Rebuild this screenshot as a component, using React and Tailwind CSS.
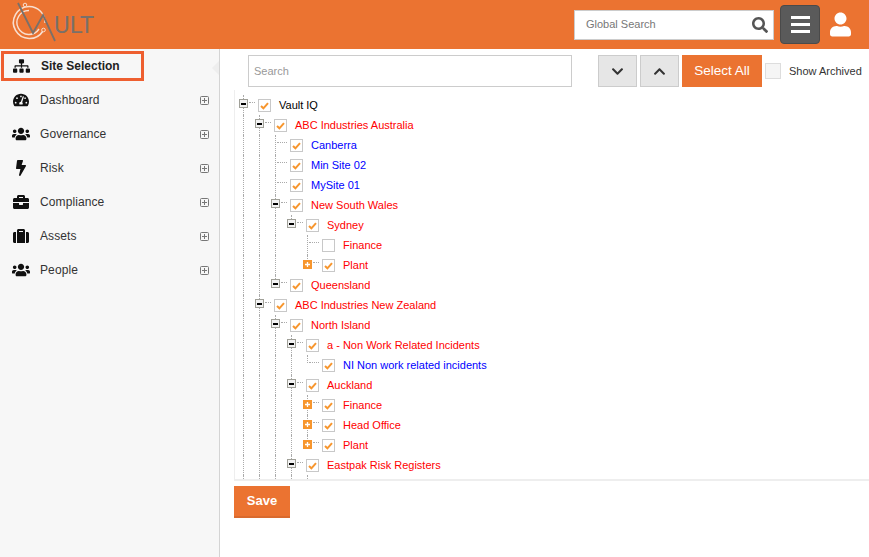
import React from "react";
import {
  FaBolt,
  FaBriefcase,
  FaChevronDown,
  FaChevronUp,
  FaSearch,
  FaSitemap,
  FaSuitcase,
  FaTachometerAlt,
  FaUser,
  FaUsers,
} from "react-icons/fa";

const FONT = "font-['Liberation_Sans',Arial,sans-serif]";

const navItems = [
  { label: "Dashboard", icon: FaTachometerAlt, size: "h-4 w-4" },
  { label: "Governance", icon: FaUsers, size: "h-[18px] w-[18px] -mx-px" },
  { label: "Risk", icon: FaBolt, size: "h-4 w-4" },
  { label: "Compliance", icon: FaBriefcase, size: "h-4 w-4" },
  { label: "Assets", icon: FaSuitcase, size: "h-4 w-4" },
  { label: "People", icon: FaUsers, size: "h-[18px] w-[18px] -mx-px" },
];

// d = depth, guides = columns with a line running through, last = last sibling
const treeRows = [
  { text: "Vault IQ", color: "text-black", d: 0, guides: [], toggle: "minus" },
  { text: "ABC Industries Australia", color: "text-[#ff0000]", d: 1, guides: [0], toggle: "minus" },
  { text: "Canberra", color: "text-[#0000ff]", d: 2, guides: [0, 1] },
  { text: "Min Site 02", color: "text-[#0000ff]", d: 2, guides: [0, 1] },
  { text: "MySite 01", color: "text-[#0000ff]", d: 2, guides: [0, 1] },
  { text: "New South Wales", color: "text-[#ff0000]", d: 2, guides: [0, 1], toggle: "minus" },
  { text: "Sydney", color: "text-[#ff0000]", d: 3, guides: [0, 1, 2], toggle: "minus", last: true },
  { text: "Finance", color: "text-[#ff0000]", d: 4, guides: [0, 1, 2], unchecked: true },
  { text: "Plant", color: "text-[#ff0000]", d: 4, guides: [0, 1, 2], toggle: "plus", last: true },
  { text: "Queensland", color: "text-[#ff0000]", d: 2, guides: [0, 1], toggle: "minus", last: true },
  { text: "ABC Industries New Zealand", color: "text-[#ff0000]", d: 1, guides: [0], toggle: "minus" },
  { text: "North Island", color: "text-[#ff0000]", d: 2, guides: [0, 1], toggle: "minus" },
  { text: "a - Non Work Related Incidents", color: "text-[#ff0000]", d: 3, guides: [0, 1, 2], toggle: "minus" },
  { text: "NI Non work related incidents", color: "text-[#0000ff]", d: 4, guides: [0, 1, 2, 3], last: true },
  { text: "Auckland", color: "text-[#ff0000]", d: 3, guides: [0, 1, 2], toggle: "minus" },
  { text: "Finance", color: "text-[#ff0000]", d: 4, guides: [0, 1, 2, 3], toggle: "plus" },
  { text: "Head Office", color: "text-[#ff0000]", d: 4, guides: [0, 1, 2, 3], toggle: "plus" },
  { text: "Plant", color: "text-[#ff0000]", d: 4, guides: [0, 1, 2, 3], toggle: "plus", last: true },
  { text: "Eastpak Risk Registers", color: "text-[#ff0000]", d: 3, guides: [0, 1, 2], toggle: "minus" },
  { text: "", color: "text-[#ff0000]", d: 4, guides: [0, 1, 2, 3], unchecked: true },
];

const Logo = () => (
  <svg width="100" height="49" viewBox="0 0 100 49" className="shrink-0">
    <path d="M29 6.5 A16 16 0 1 0 43 31" fill="none" stroke="#f8dfd0" strokeWidth="1.6" />
    <path d="M29 10.5 A12 12 0 1 0 39 29" fill="none" stroke="#f8dfd0" strokeWidth="1.4" />
    <path d="M29 6.5 A16 16 0 0 1 45 23" fill="none" stroke="#f8dfd0" strokeWidth="1.4" />
    <circle cx="25" cy="5" r="1.8" fill="#eb7331" stroke="#f8dfd0" strokeWidth="1" />
    <circle cx="43.5" cy="30" r="1.8" fill="#eb7331" stroke="#f8dfd0" strokeWidth="1" />
    <path d="M18 3 L33 33 L43 15 L55 41" fill="none" stroke="#7a7069" strokeWidth="1.8" />
    <text x="54" y="33" fill="#7a7069" fontFamily="Roboto, sans-serif" fontSize="24" letterSpacing="0.3">
      ULT
    </text>
  </svg>
);

const TreeToggle = ({ kind }) =>
  kind === "plus" ? (
    <span className="absolute left-1 top-[5px] flex h-[9px] w-[9px] items-center justify-center bg-[#f7962e]">
      <svg width="7" height="7" viewBox="0 0 7 7">
        <path d="M3.5 1v5M1 3.5h5" stroke="#fff" strokeWidth="1.3" />
      </svg>
    </span>
  ) : (
    <span className="absolute left-1 top-1 flex h-[9px] w-[9px] items-center justify-center border border-[#a0a098] bg-[#f2f2f2]">
      <span className="h-[2px] w-[5px] bg-black" />
    </span>
  );

const TreeRow = ({ row }) => {
  const cols = [];
  for (let i = 0; i < row.d; i++) {
    cols.push(
      <div key={i} className="h-5 w-4 shrink-0">
        {row.guides.includes(i) && <div className="ml-2 h-full border-l border-dotted border-[#aaa]" />}
      </div>
    );
  }
  return (
    <div className="flex h-5 items-start">
      {cols}
      <div className="relative h-5 w-4 shrink-0">
        <div className={`ml-2 border-l border-dotted border-[#aaa] ${row.last ? "h-2" : "h-full"}`} />
        <div
          className={`absolute top-[7px] h-px border-t border-dotted border-[#aaa] ${
            row.toggle ? "left-[14px] w-[6px]" : "left-[10px] w-[10px]"
          }`}
        />
        {row.toggle && <TreeToggle kind={row.toggle} />}
      </div>
      <span className="ml-[7px] mt-1 flex h-[13px] w-[13px] shrink-0 items-center justify-center border border-[#c8c8c8] bg-white">
        {!row.unchecked && (
          <svg width="9" height="8" viewBox="0 0 9 8">
            <path d="M1 4 L3.4 6.3 L8 1.2" fill="none" stroke="#f7962e" strokeWidth="2" />
          </svg>
        )}
      </span>
      <span className={`ml-2 text-[11px] leading-5 whitespace-nowrap ${row.color}`}>{row.text}</span>
    </div>
  );
};

export default function App() {
  return (
    <div className={`flex min-h-[557px] flex-col bg-white ${FONT}`}>
      {/* Header */}
      <header className="flex h-[49px] items-center justify-between bg-[#eb7331]">
        <Logo />
        <div className="flex items-center">
          <div className="flex h-[30px] w-[200px] items-center justify-between border border-[#ccc] bg-white pl-[11px] pr-[5px]">
            <span className="text-[11px] text-[#777]">Global Search</span>
            <FaSearch className="h-4 w-4 text-[#555]" />
          </div>
          <button className="ml-[6px] flex h-[39px] w-10 flex-col items-center justify-center gap-1 rounded-sm border border-[#4a4a4a] bg-[#5a5a5a]">
            <span className="h-[3px] w-[19px] bg-white" />
            <span className="h-[3px] w-[19px] bg-white" />
            <span className="h-[3px] w-[19px] bg-white" />
          </button>
          <FaUser className="ml-[10px] mr-[18px] h-[25px] w-[21px] text-white" />
        </div>
      </header>

      <div className="flex flex-1">
        {/* Sidebar */}
        <aside className="relative w-[220px] shrink-0 border-r border-[#d4d4d4] bg-[#f7f7f7] pt-[2px]">
          <div className="ml-px flex h-[30px] w-[143px] items-center border-[3px] border-[#ee5f30] pl-[9px]">
            <FaSitemap className="h-4 w-[17px] text-[#111]" />
            <span className="ml-[11px] text-[12px] font-bold text-[#222]">Site Selection</span>
          </div>
          <div className="absolute right-0 top-[12px] h-0 w-0 border-y-[7px] border-r-[7px] border-y-transparent border-r-[#eeeeee]" />
          <nav className="mt-[2px]">
            {navItems.map((item) => {
              const Icon = item.icon;
              return (
                <div key={item.label} className="flex h-[34px] items-center pl-[13px] pr-[10px]">
                  <Icon className={`${item.size} text-[#111]`} />
                  <span className="ml-[11px] flex-1 text-[12px] tracking-[0.1px] text-[#333]">{item.label}</span>
                  <svg width="9" height="9" viewBox="0 0 9 9">
                    <rect x="0.5" y="0.5" width="8" height="8" rx="1" fill="none" stroke="#777" />
                    <path d="M4.5 2v5M2 4.5h5" stroke="#777" />
                  </svg>
                </div>
              );
            })}
          </nav>
        </aside>

        {/* Main */}
        <main className="min-w-0 flex-1">
          <div className="mt-[6px] flex h-[32px] items-center pl-[28px]">
            <input
              placeholder="Search"
              className="h-[32px] w-[324px] border border-[#ccc] bg-white px-[5px] text-[11px] placeholder:text-[#999]"
            />
            <button className="ml-[26px] flex h-[32px] w-[39px] items-center justify-center border border-[#ccc] bg-[#e6e6e6]">
              <FaChevronDown className="h-[13px] w-[13px] text-[#333]" />
            </button>
            <button className="ml-[3px] flex h-[32px] w-[39px] items-center justify-center border border-[#ccc] bg-[#e6e6e6]">
              <FaChevronUp className="h-[13px] w-[13px] text-[#333]" />
            </button>
            <button className="ml-[3px] h-[32px] w-20 bg-[#eb7331] text-[13.5px] text-white">Select All</button>
            <span className="ml-[3px] h-4 w-4 border border-[#ddd] bg-[#f5f5f5]" />
            <span className="ml-2 text-[11px] text-[#333]">Show Archived</span>
          </div>

          {/* Tree */}
          <div className="ml-[14px] mt-[3px] h-[391px] overflow-hidden border-b-2 border-l border-[#eeeeee] pt-[5px]">
            {treeRows.map((row, i) => (
              <TreeRow key={i} row={row} />
            ))}
          </div>

          <button className="ml-[14px] mt-[5px] h-[32px] w-14 border-b-2 border-[#d96a2e] bg-[#eb7331] text-[13px] font-bold text-white">
            Save
          </button>
        </main>
      </div>
    </div>
  );
}
